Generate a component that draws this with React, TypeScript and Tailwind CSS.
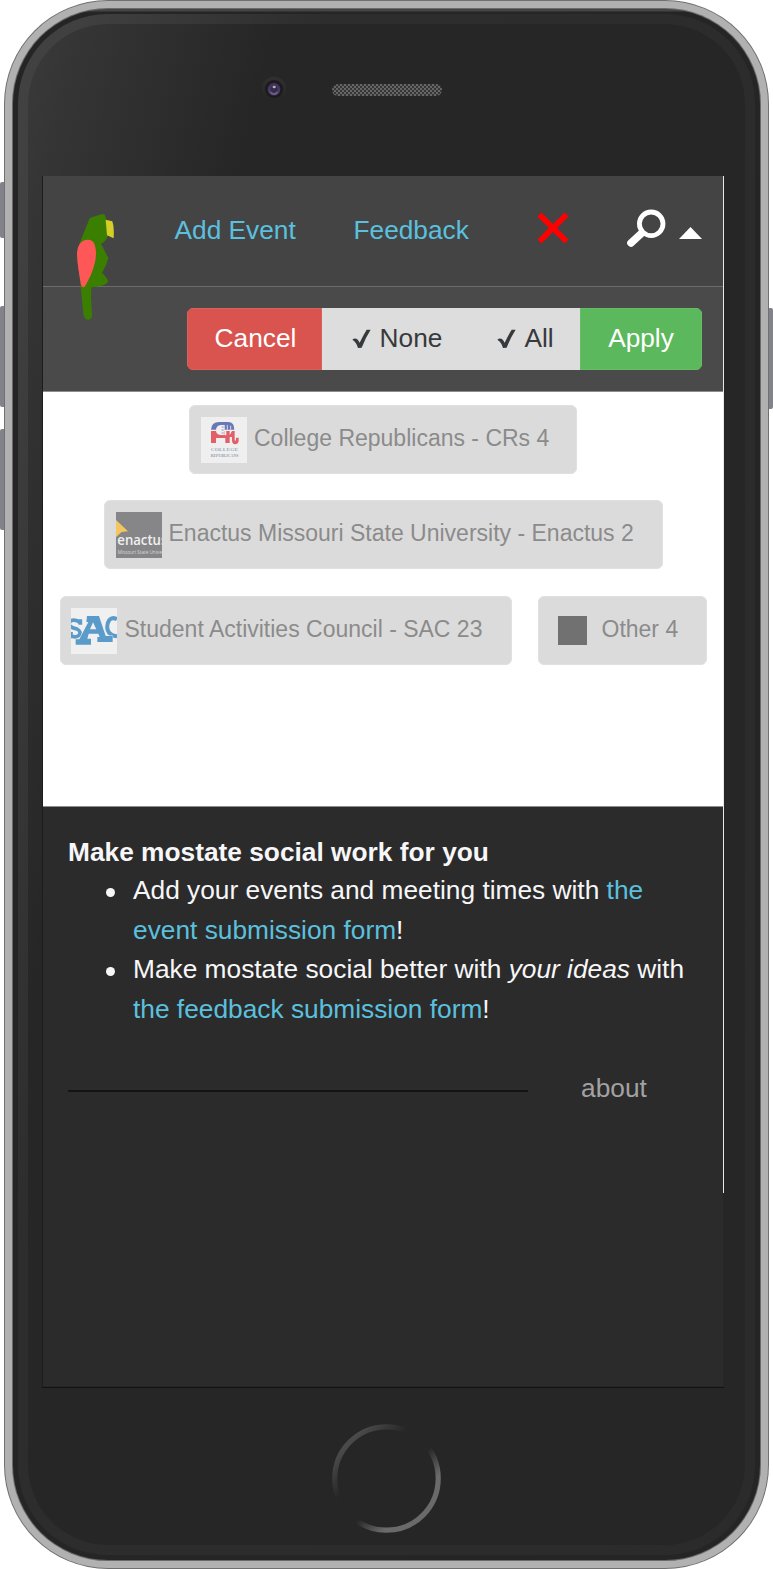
import React from "react";

function Parrot() {
  return (
    <svg className="absolute left-[32px] top-[36px] z-10 h-[110px] w-[40px]" viewBox="105 125 120 330" aria-hidden="true">
      <path
        fill="#3b7f00"
        d="M149 144 Q151 141 188 131 Q197 131 198 147 L204 196 Q198 213 183 220 L205 263 Q200 285 186 308 Q203 322 204 333 Q200 348 154 351 L153 380 L156 435 Q156 447 145 448 Q132 447 130 430 L122 345 L112 262 L119 218 Z"
      />
      <path
        fill="#ff5757"
        d="M144 208 C162 208 168 226 168 250 C168 286 148 326 136 346 Q129 356 123 344 C118 312 111 280 111 248 C113 222 125 208 144 208 Z"
      />
      <path fill="#d4ce27" d="M197 148 L217 153 Q223 172 221 204 L201 195 Z" />
    </svg>
  );
}

function SearchIcon() {
  return (
    <svg className="ml-[60px] h-[40px] w-[40px]" viewBox="0 0 40 40" aria-hidden="true">
      <path d="M18 22 L5 34" stroke="#fff" strokeWidth="7.6" strokeLinecap="round" />
      <circle cx="25.2" cy="14.8" r="11.8" fill="#444444" stroke="#fff" strokeWidth="4.8" />
    </svg>
  );
}

function Check() {
  return (
    <svg className="h-[20px] w-[19px] shrink-0" viewBox="0 0 57 60" aria-hidden="true">
      <path d="M1 32 Q8 26 15 30 Q20 35 23 41 Q34 18 44 2 L56 2 Q41 25 29 56 L18 57 Q14 40 1 32Z" fill="#373a3c" />
    </svg>
  );
}

function RepublicansLogo() {
  return (
    <svg className="h-[46px] w-[46px] bg-[#efefef]" viewBox="0 0 138 138" aria-hidden="true">
      <path d="M30 38 Q31 15 54 15 H82 Q100 16 100 38Z" fill="#6878b4" />
      <path
        d="M30 42 H72 V55 H76 V42 H86 V55 L93 42 H101 V68 Q101 73 105 70 V62 H113 V72 Q111 82 102 82 Q93 81 93 70 V60 H86 V78 H73 V63 H45 V78 H30Z"
        fill="#e35f68"
      />
      <path d="M45 42 Q44 25 60 24 H71 V54 H58 Q46 53 45 42Z" fill="#efefef" />
      <path d="M62 30 H68 M62 39 H68 M62 48 H68" stroke="#8b95bd" strokeWidth="3" />
      <path d="M79 24 V38 M89 26 V38" stroke="#efefef" strokeWidth="2.5" />
      <text x="29" y="101" textLength="83" lengthAdjust="spacingAndGlyphs" fontSize="15" fontWeight="700" fontFamily="Liberation Serif, serif" fill="#a3adba">
        COLLEGE
      </text>
      <text x="29" y="119" textLength="83" lengthAdjust="spacingAndGlyphs" fontSize="12" fontWeight="700" fontFamily="Liberation Serif, serif" fill="#929fb0">
        REPUBLICANS
      </text>
    </svg>
  );
}

function EnactusLogo() {
  return (
    <svg className="h-[46px] w-[46px] bg-[#868688]" viewBox="0 0 138 138" aria-hidden="true">
      <path d="M0 24 L36 58 L17 60 L0 75Z" fill="#f2c661" />
      <text x="4" y="100" textLength="150" lengthAdjust="spacingAndGlyphs" fontSize="41" fontWeight="600" fontFamily="Open Sans, sans-serif" fill="#f0f0f0">
        enactus
      </text>
      <text x="5" y="125" textLength="160" lengthAdjust="spacingAndGlyphs" fontSize="16" fontFamily="Open Sans, sans-serif" fill="#d8d8d8">
        Missouri State University
      </text>
    </svg>
  );
}

function SacLogo() {
  return (
    <svg className="h-[46px] w-[46px] bg-[#f0f0f0]" viewBox="0 0 138 138" aria-hidden="true">
      <g fill="none" stroke="#5a9bc9">
        <path d="M28 34 V50 M28 45 Q16 34 4 37 Q-9 42 -4 53 Q2 60 18 63 Q31 70 25 81 Q15 91 0 83 M0 72 V91" strokeWidth="11" />
        <path d="M138 34 Q124 26 115 36 Q106 48 110 66 Q116 83 138 85" strokeWidth="12" />
      </g>
      <path
        d="M48 24 H84 L104 84 H125 V102 H79 V87 H86 L82 77 H53 L49 92 H60 V110 H14 V94 H25 L52 42 H46Z M66 43 L57 64 H76Z"
        fill="#5a9bc9"
        fillRule="evenodd"
        stroke="#f0f0f0"
        strokeWidth="3"
        paintOrder="stroke"
      />
    </svg>
  );
}

function Chip({ className, logo, label }: { className: string; logo: React.ReactNode; label: string }) {
  return (
    <button
      type="button"
      className={`flex h-[69px] shrink-0 items-center rounded-[6px] border border-[#e0e0e0] bg-[#dbdbdb] text-[23px] leading-[33px] whitespace-nowrap text-[#8b8b8b] ${className}`}
    >
      {logo}
      <span className="-mt-[3px]">{label}</span>
    </button>
  );
}

function AppScreen() {
  return (
    <div className="flex h-[1210px] w-[680px] flex-col bg-[#2b2b2b]">
      <header className="relative">
        <Parrot />
        <nav className="flex h-[111px] items-center border-b border-[#6c6c6c] bg-[#444444] text-[26.28px] leading-[39px] text-[#5bc0de]">
          <a className="-mt-[2px] ml-[131.5px] w-[122px] whitespace-nowrap">Add Event</a>
          <a className="-mt-[2px] ml-[57px] w-[116px] whitespace-nowrap">Feedback</a>
          <svg className="mt-[-6px] ml-[66.5px] h-[34px] w-[34px]" viewBox="0 0 34 34" aria-hidden="true">
            <path d="M3.4 3.4 L30.6 30.6 M30.6 3.4 L3.4 30.6" stroke="#ff0000" strokeWidth="5.6" />
          </svg>
          <div className="-ml-[4px] flex items-center pb-[5px]">
            <SearchIcon />
            <svg className="mt-[8px] ml-[13px] h-[12px] w-[23px]" viewBox="0 0 23 12" aria-hidden="true">
              <path d="M0 12 L11.5 0 L23 12Z" fill="#fff" />
            </svg>
          </div>
        </nav>
        <div className="flex h-[105px] items-start justify-end border-b border-[#8d8d8d] bg-[#4a4a4a] pt-[21px] pr-[21px]">
          <div className="flex h-[62px] overflow-hidden rounded-[6px] text-[26.28px] leading-[59px] text-[#373a3c]">
            <button type="button" className="flex w-[135px] justify-center border border-[#d9625e] bg-[#d9534f] pl-[2px] text-white">Cancel</button>
            <button type="button" className="flex w-[147px] justify-center gap-[9px] bg-[#dddddd] pt-px pl-[3px] whitespace-nowrap">
              <span className="flex pt-[20px]"><Check /></span>
              None
            </button>
            <button type="button" className="flex w-[111px] justify-center gap-[8px] bg-[#dddddd] pt-px pl-[2px] whitespace-nowrap">
              <span className="flex pt-[20px]"><Check /></span>
              All
            </button>
            <button type="button" className="flex w-[122px] justify-center border border-[#66bd66] bg-[#5cb85c] text-white">Apply</button>
          </div>
        </div>
      </header>
      <main className="flex h-[415px] flex-col items-center border-b border-[#8d8d8d] bg-white pt-[13px]">
        <Chip className="mb-[26px] w-[388px] gap-[7px] pl-[11px]" logo={<RepublicansLogo />} label="College Republicans - CRs 4" />
        <Chip className="mb-[27px] w-[559px] gap-[7px] pl-[11px]" logo={<EnactusLogo />} label="Enactus Missouri State University - Enactus 2" />
        <div className="flex gap-[26px]">
          <Chip className="w-[452px] gap-[8px] pl-[10px]" logo={<SacLogo />} label="Student Activities Council - SAC 23" />
          <Chip
            className="w-[169px] gap-[15px] pl-[19px]"
            logo={<span className="h-[29px] w-[29px] bg-[#717171]" />}
            label="Other 4"
          />
        </div>
      </main>
      <footer className="pt-[26px] pr-[23px] pl-[25px] text-[26.3px] leading-[39.4px] text-[#f7f7f9]">
        <h2 className="-mb-px font-bold">Make mostate social work for you</h2>
        <ul className="pl-[65px]">
          {[
            <>
              Add your events and meeting times with <a className="text-[#5bc0de]">the event submission form</a>!
            </>,
            <>
              Make mostate social better with <em>your ideas</em> with <a className="text-[#5bc0de]">the feedback submission form</a>!
            </>,
          ].map((item, index) => (
            <li key={index} className="-ml-[27px] flex">
              <span className="mt-[17px] mr-[18px] h-[9px] w-[9px] shrink-0 rounded-full bg-[#f7f7f9]" />
              <p>{item}</p>
            </li>
          ))}
        </ul>
        <div className="mt-[40px] flex items-center">
          <hr className="mt-[5px] w-[460px] border-t-2 border-[#141414]" />
          <a className="ml-[53px] text-[#a2a2a2]">about</a>
        </div>
      </footer>
    </div>
  );
}

function Camera() {
  return (
    <svg className="h-[26px] w-[26px]" viewBox="0 0 26 26" aria-hidden="true">
      <defs>
        <radialGradient id="lens" cx="50%" cy="60%" r="55%">
          <stop offset="0" stopColor="#6b5c8c" />
          <stop offset="1" stopColor="#3d2c55" />
        </radialGradient>
        <linearGradient id="rim" x1="0" y1="0" x2="0" y2="1">
          <stop offset="0" stopColor="#303030" />
          <stop offset="1" stopColor="#252525" />
        </linearGradient>
      </defs>
      <circle cx="13" cy="13" r="12.3" fill="url(#rim)" />
      <circle cx="13" cy="13" r="9" fill="#1b1a1d" />
      <circle cx="13" cy="13.2" r="6.4" fill="url(#lens)" />
      <circle cx="13" cy="13.2" r="3.8" fill="#352d45" />
      <path d="M9.5 16 Q13 20 16.5 16" stroke="#70618f" strokeWidth="1.3" fill="none" />
      <ellipse cx="13.2" cy="11" rx="1.6" ry="1.2" fill="#b5afbd" />
    </svg>
  );
}

function Speaker() {
  return (
    <svg className="mt-[1px] h-[12px] w-[110px]" viewBox="0 0 110 12" aria-hidden="true">
      <defs>
        <pattern id="mesh" width="4" height="4" patternUnits="userSpaceOnUse">
          <rect width="4" height="4" fill="#363636" />
          <rect width="2" height="2" fill="#666666" />
          <rect x="2" y="2" width="2" height="2" fill="#666666" />
        </pattern>
      </defs>
      <rect width="110" height="12" rx="6" fill="url(#mesh)" />
    </svg>
  );
}

function HomeButton() {
  return (
    <svg className="mt-[36px] ml-[304px] h-[109px] w-[109px]" viewBox="0 0 109 109" aria-hidden="true">
      <defs>
        <linearGradient id="home" x1="0" y1="0" x2="1" y2="1">
          <stop offset="0.15" stopColor="#4a4a4a" />
          <stop offset="0.36" stopColor="#262626" />
          <stop offset="0.56" stopColor="#262626" />
          <stop offset="0.74" stopColor="#6a6a6a" />
        </linearGradient>
      </defs>
      <circle cx="54.5" cy="54.5" r="51.7" fill="none" stroke="url(#home)" strokeWidth="5.2" />
    </svg>
  );
}

export default function App() {
  return (
    <div className="relative h-[1570px] w-[773px] overflow-hidden bg-white pl-[4px] font-['Liberation_Sans',Arial,sans-serif]">
      <span className="absolute top-[182px] left-0 h-[56px] w-[6px] rounded-l-[2px] bg-[#82828a]" />
      <span className="absolute top-[306px] left-0 h-[101px] w-[6px] rounded-l-[2px] bg-[#82828a]" />
      <span className="absolute top-[429px] left-0 h-[101px] w-[6px] rounded-l-[2px] bg-[#82828a]" />
      <span className="absolute top-[308px] left-[767px] h-[101px] w-[6px] rounded-r-[2px] bg-[#82828a]" />
      <div className="relative h-[1569px] w-[765px] rounded-[104px] bg-[#707070] p-px">
        <div className="h-full rounded-[103px] bg-[#b1b1b1] p-[7px]">
          <div className="h-full rounded-[96px] bg-[#6a6a6a] p-px">
            <div className="h-full rounded-[95px] bg-[linear-gradient(180deg,#444444_0px,#444444_2px,#252525_3px)] p-[5px]">
              <div className="h-full rounded-[90px] bg-[linear-gradient(104deg,#424242_0px,#404040_60px,#2d2d2d_300px,#2b2b2b_100%)] p-[10px]">
                <div className="flex h-full flex-col rounded-[80px] bg-[linear-gradient(104deg,#3a3a3a_0px,#353535_50px,#262626_240px)]">
                  <div className="flex h-[152px] shrink-0 items-start gap-[45px] pt-[52px] pl-[233px]">
                    <Camera />
                    <div className="flex h-[26px] items-center">
                      <Speaker />
                    </div>
                  </div>
                  <div className="ml-[14px] flex h-[1212px] w-[682px] shrink-0 border-b border-l border-b-[#131313] border-l-[#1c1c1c]">
                    <AppScreen />
                    <div className="h-[1017px] w-px bg-[#e8e8e8]" />
                  </div>
                  <HomeButton />
                </div>
              </div>
            </div>
          </div>
        </div>
      </div>
    </div>
  );
}
